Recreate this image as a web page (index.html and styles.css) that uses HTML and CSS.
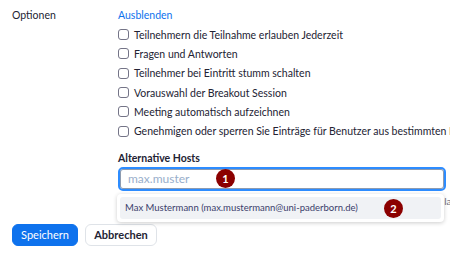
FILE: index.html
```html
<!DOCTYPE html>
<html>
<head lang="de">
    <meta charset="UTF-8">
    <title>Optionen</title>
    <link rel="stylesheet" href="styles.css">
</head>
<body>
  <div class="page">
    <div class="row">
      <div class="label">Optionen</div>
      <div class="content">
        <a class="link">Ausblenden</a>
        <ul class="checks">
          <li><span class="box"></span>Teilnehmern die Teilnahme erlauben Jederzeit</li>
          <li><span class="box"></span>Fragen und Antworten</li>
          <li><span class="box"></span>Teilnehmer bei Eintritt stumm schalten</li>
          <li><span class="box"></span>Vorauswahl der Breakout Session</li>
          <li><span class="box"></span>Meeting automatisch aufzeichnen</li>
          <li><span class="box"></span>Genehmigen oder sperren Sie Einträge für Benutzer aus bestimmten Endpunkten</li>
        </ul>
        <div class="hosts-title">Alternative Hosts</div>
        <div class="field">
          <div class="input">max.muster</div>
          <span class="badge badge-one">1</span>
          <div class="hint"><span>Geben Sie die E-Mail-Adresse eines Benutzers ein, um ihn einzuladen</span></div>
          <div class="dropdown">
            <div class="item">Max Mustermann (max.mustermann@uni-paderborn.de)</div>
            <span class="badge badge-two">2</span>
          </div>
        </div>
      </div>
    </div>
    <div class="buttons">
      <button class="btn primary">Speichern</button>
      <button class="btn">Abbrechen</button>
    </div>
  </div>
</body>
</html>
```

FILE: styles.css
```css
*{
  margin: 0;
  padding: 0;
  box-sizing: border-box;
}
html, body{
  overflow: hidden;
}
body{
  font-family: Lato, "Liberation Sans", sans-serif;
  font-size: 10.5px;
  color: #232333;
  background: #fff;
}
.page{
  padding-top: 8px;
}
.row{
  display: grid;
  grid-template-columns: 106px 1fr;
  padding-left: 12px;
}
.content{
  min-width: 0;
}
.label, .link{
  line-height: 14px;
}
.link{
  display: block;
  color: #0e72ed;
}
.checks{
  list-style: none;
  margin-top: 3px;
}
.checks li{
  display: flex;
  align-items: center;
  height: 19.3px;
  white-space: nowrap;
}
.box{
  flex: none;
  width: 11px;
  height: 11px;
  border: 1px solid #747487;
  border-radius: 3px;
  margin-right: 5px;
}
.hosts-title{
  font-weight: 700;
  line-height: 14px;
  margin-top: 10px;
}
.field{
  position: relative;
  padding-left: 2px;
  margin-left: -2px;
  padding-top: 1px;
  margin-top: 1px;
}
.input{
  width: 328px;
  height: 24px;
  border: 2px solid #2d8cff;
  border-radius: 5px;
  padding-left: 8px;
  line-height: 20px;
  font-size: 12px;
  color: #98aecb;
  box-shadow: inset 0 0 0 1px #8d9bb0;
}
.hint{
  display: flex;
  justify-content: flex-end;
  width: 350px;
  overflow: hidden;
  margin-top: 4px;
  white-space: nowrap;
  color: #6e6e80;
  font-size: 10px;
  line-height: 12px;
}
.hint span{
  flex: none;
}
.dropdown{
  position: absolute;
  top: 28px;
  left: 1px;
  width: 327px;
  height: 28px;
  background: #fff;
  border-radius: 4px;
  padding: 3px;
  box-shadow: 0 1px 4px rgba(0,0,0,0.2);
}
.item{
  height: 22px;
  line-height: 22px;
  padding-left: 5px;
  background: #f0f2f5;
  border-radius: 3px;
  color: #3a3d6b;
  font-size: 9.5px;
  white-space: nowrap;
}
.badge{
  position: absolute;
  width: 19px;
  height: 19px;
  border-radius: 50%;
  background: #8b0000;
  color: #fff;
  font-weight: 700;
  font-size: 11px;
  line-height: 19px;
  text-align: center;
}
.badge-one{
  left: 100px;
  top: 3px;
}
.badge-two{
  left: 267px;
  top: 5px;
}
.buttons{
  display: flex;
  gap: 7px;
  padding-left: 12px;
  margin-top: 17px;
}
.btn{
  width: 72px;
  height: 22px;
  border: 1px solid #dfe3e8;
  border-radius: 6px;
  background: #fff;
  color: #232333;
  font-family: inherit;
  font-size: 11px;
  font-weight: 700;
}
.btn.primary{
  width: 66px;
  border-color: #0e72ed;
  background: #0e72ed;
  color: #fff;
  font-weight: 400;
}
```
